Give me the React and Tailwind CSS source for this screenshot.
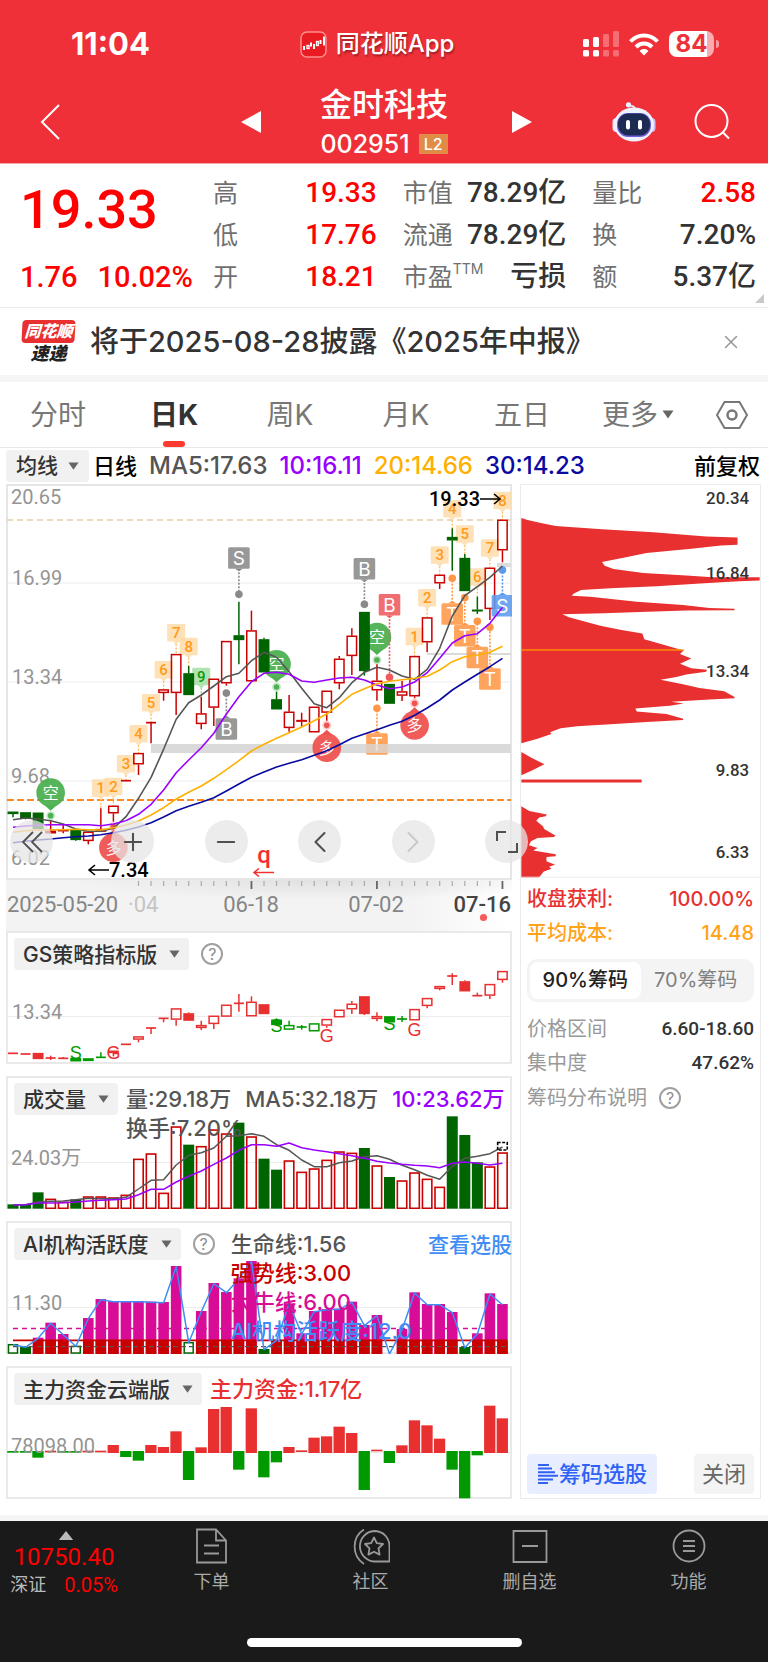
import { ChevronLeft, ChevronRight, ChevronsLeft, Minus, Plus, X } from 'lucide-react';

const DIN = "[font-family:'Roboto','Noto_Sans_CJK_SC',sans-serif]";
const COUNT = 40;
const cx = (i) => 13 + 12.55 * i;

/* Chart data is kept in thirds of a pixel below the top of each drawing. */
const at = (top) => (v) => top + v / 3;
const line = (values, y) => values.map((v, i) => `${cx(i).toFixed(1)},${y(v).toFixed(1)}`).join(' ');

// [up, high, bodyTop, bodyBottom, low]
const candles = [
  [0, 995, 995, 1002, 1012], [0, 997, 997, 1015, 1018], [0, 998, 998, 1047, 1047], [1, 1020, 1052, 1060, 1062],
  [1, 1035, 1048, 1054, 1060], [0, 1050, 1050, 1080, 1082], [1, 1055, 1055, 1083, 1093], [1, 985, 1047, 1055, 1055],
  [1, 977, 977, 1000, 1025], [1, 902, 902, 902, 902], [1, 819, 819, 853, 885], [1, 728, 728, 728, 790],
  [1, 628, 628, 639, 662], [1, 522, 522, 639, 705], [0, 558, 580, 645, 645], [1, 650, 700, 732, 748],
  [1, 596, 596, 683, 738], [1, 483, 483, 610, 617], [0, 365, 466, 480, 553], [1, 392, 451, 604, 604],
  [0, 473, 478, 577, 577], [0, 635, 658, 688, 688], [1, 645, 695, 744, 755], [1, 698, 720, 725, 740],
  [1, 680, 680, 757, 757], [1, 632, 632, 698, 722], [1, 528, 536, 610, 628], [1, 445, 467, 528, 585],
  [0, 396, 396, 573, 587], [1, 553, 602, 631, 662], [0, 612, 612, 671, 671], [1, 603, 634, 647, 663],
  [1, 528, 528, 649, 655], [1, 412, 412, 487, 517], [1, 284, 284, 310, 327], [0, 145, 171, 181, 272],
  [0, 222, 234, 333, 333], [0, 350, 389, 393, 402], [1, 263, 263, 387, 420], [1, 119, 119, 211, 247],
];
const ma5 = [1019, 1014, 1017, 1022, 1032, 1047, 1054, 1054, 1045, 1010, 955, 892, 808, 718, 668, 645, 618, 590, 580, 542, 517, 532, 575, 625, 671, 683, 653, 608, 577, 562, 570, 588, 598, 568, 505, 408, 347, 320, 292, 258];
const ma10 = [1042, 1038, 1036, 1034, 1034, 1034, 1034, 1037, 1032, 1022, 1003, 973, 930, 878, 840, 803, 760, 702, 650, 605, 580, 577, 583, 603, 607, 600, 594, 592, 600, 615, 626, 621, 606, 578, 535, 489, 467, 461, 430, 382];
const ma20 = [1057, 1052, 1050, 1049, 1049, 1048, 1049, 1050, 1043, 1035, 1023, 1005, 983, 957, 937, 918, 895, 869, 842, 813, 793, 775, 758, 741, 722, 702, 673, 643, 626, 611, 604, 599, 595, 589, 570, 545, 530, 525, 517, 499];
const ma30 = [1088, 1084, 1080, 1077, 1073, 1070, 1068, 1064, 1058, 1051, 1041, 1028, 1011, 992, 979, 967, 953, 933, 912, 892, 876, 861, 850, 839, 826, 812, 794, 775, 762, 749, 736, 724, 706, 684, 660, 630, 606, 583, 560, 535];

// [index, label, boxTop, targetY]
const tags = [
  [7, '1', 898, 985], [8, '2', 893, 977], [9, '3', 825, 902], [10, '4', 735, 819], [11, '5', 642, 728], [12, '6', 543, 628],
  [13, '7', 432, 522], [14, '8', 473, 558], [15, '9', 563, 650], [32, '1', 443, 528], [33, '2', 327, 412], [34, '3', 199, 284],
  [35, '4', 60, 145], [36, '5', 136, 222], [37, '6', 265, 350], [38, '7', 178, 263], [39, '8', 35, 119],
];
// [index, label, boxTop, dotY, colour]
const flags = [
  [18, 'S', 202, 343, '#8a8a8a'], [17, 'B', 715, 639, '#8a8a8a'], [28, 'B', 234, 373, '#8a8a8a'], [30, 'B', 342, 592, '#ee5a5f'],
  [29, 'T', 760, 685, '#ff9746'], [35, 'T', 370, 295, '#ff9746'], [36, 'T', 435, 353, '#ff9746'], [37, 'T', 500, 424, '#ff9746'],
  [38, 'T', 565, 442, '#ff9746'], [39, 'S', 345, 270, '#5b9bee'],
];
// [index, label, circleY, dotY, colour]
const pins = [
  [3, '空', 938, 1007, '#4db151'], [21, '空', 553, 621, '#4db151'], [29, '空', 471, 540, '#4db151'],
  [8, '多', 1103, 1040, '#ef5350'], [25, '多', 803, 736, '#ef5350'], [32, '多', 736, 670, '#ef5350'],
];

function AxisLabel({ x = 11, y, children }) {
  return <text x={x} y={y} className={`fill-[#949494] text-[20px] ${DIN}`}>{children}</text>;
}

function Candle({ i, c, y, up, down, filled, half = 5 }) {
  const [, high, top, bottom, low] = c;
  const color = c[0] ? up : down;
  const solid = filled || bottom - top < 6;
  return (
    <g stroke={color} strokeWidth="1.5" fill={solid ? color : 'none'}>
      {high < top && <line x1={cx(i)} x2={cx(i)} y1={y(high)} y2={y(top)} />}
      {low > bottom && <line x1={cx(i)} x2={cx(i)} y1={y(bottom)} y2={y(low)} />}
      {bottom - top < 3
        ? <line x1={cx(i) - half} x2={cx(i) + half} y1={y(top)} y2={y(top)} strokeWidth="1.7" />
        : <rect x={cx(i) - half + 0.3} y={y(top) + 0.6} width={half * 2 - 0.6} height={Math.max((bottom - top) / 3 - 1.2, 0.5)} />}
    </g>
  );
}

function MainChart() {
  const y = at(480);
  return (
    <svg viewBox="6 484 506 396" className="block w-full" role="img" aria-label="日K">
      <rect x="7" y="485" width="504" height="394" fill="#fff" stroke="#e6e6e6" strokeWidth="2" />
      {[583, 682, 781].map((v) => <line key={v} x1="7" x2="511" y1={v} y2={v} stroke="#ececec" />)}
      <rect x="151" y="744" width="360" height="9" fill="#dadada" />
      <rect x="427" y="653" width="84" height="2" fill="#dadada" />
      <rect x="497" y="563" width="14" height="4" fill="#dcdcdc" />
      <line x1="7" x2="511" y1="520" y2="520" stroke="#e3cda8" strokeWidth="1.6" strokeDasharray="6 4" />
      <AxisLabel y={504}>20.65</AxisLabel>
      <AxisLabel x={12} y={585}>16.99</AxisLabel>
      <AxisLabel x={12} y={684}>13.34</AxisLabel>
      <AxisLabel y={783}>9.68</AxisLabel>
      <AxisLabel y={865}>6.02</AxisLabel>
      <line x1="7" x2="511" y1="800" y2="800" stroke="#ff8a1f" strokeWidth="1.8" strokeDasharray="7 3" />
      {pins.map(([i, label, c, d, color]) => {
        const dir = d > c ? 1 : -1;
        return (
          <g key={`${label}${i}`}>
            <circle cx={cx(i)} cy={y(c)} r="14.3" fill={color} opacity="0.95" />
            <path d={`M${cx(i) - 6} ${y(c) + dir * 12.5}L${cx(i)} ${y(c) + dir * 18}L${cx(i) + 6} ${y(c) + dir * 12.5}Z`} fill={color} />
            <circle cx={cx(i)} cy={y(d)} r="4.5" fill={color} opacity="0.3" />
            <circle cx={cx(i)} cy={y(d)} r="2.8" fill={color} />
            <text x={cx(i)} y={y(c) + 6} textAnchor="middle" className="fill-white text-[16px] [font-family:'Noto_Sans_CJK_SC',sans-serif]">{label}</text>
          </g>
        );
      })}
      {tags.map(([i, label, top, target]) => {
        const green = label === '9';
        const fill = green ? '#9fdc9f' : '#ffd9a6';
        return (
          <g key={`tag${i}`}>
            <line x1={cx(i)} x2={cx(i)} y1={y(top) + 20} y2={y(target)} stroke={green ? '#8bd08b' : '#ffb54d'} strokeWidth="1.2" strokeDasharray="2 1.5" />
            <path d={`M${cx(i) - 8} ${y(top)}h16q1 0 1 1v15.500q0 1-1 1h-5l-3 3.500l-3-3.500h-5q-1 0-1-1v-15.500q0-1 1-1Z`} fill={fill} opacity="0.8" />
            <text x={cx(i)} y={y(top) + 14} textAnchor="middle" className={`${green ? 'fill-[#0a9c0a]' : 'fill-[#ff9a1a]'} text-[15px] font-medium [font-family:Roboto,sans-serif]`}>{label}</text>
          </g>
        );
      })}
      {candles.map((c, i) => <Candle key={i} i={i} c={c} y={y} up="#cc0000" down="#006400" filled={!c[0]} />)}
      {flags.map(([i, label, top, dot, color]) => {
        const below = top > dot;
        const edge = below ? y(top) : y(top) + 21.5;
        const dir = below ? -1 : 1;
        return (
          <g key={`flag${i}`}>
            <line x1={cx(i)} x2={cx(i)} y1={edge} y2={y(dot)} stroke={color} strokeWidth="1.6" strokeDasharray="2 1.5" />
            <circle cx={cx(i)} cy={y(dot)} r="3.8" fill={color} />
            <path d={`M${cx(i) - 4} ${edge}L${cx(i)} ${edge + dir * 2.5}L${cx(i) + 4} ${edge}Z`} fill={color} />
            <rect x={cx(i) - 10.8} y={y(top)} width="21.6" height="21.5" rx="1.5" fill={color} opacity="0.88" />
            <text x={cx(i)} y={y(top) + 17.5} textAnchor="middle" className="fill-white text-[19px] [font-family:Inter,sans-serif]">{label}</text>
          </g>
        );
      })}
      <rect x="364" y="744" width="26" height="9" fill="#dadada" opacity="0.75" />
      <g fill="none" strokeWidth="1.6" strokeLinejoin="round">
        <polyline points={line(ma5, y)} stroke="#555" />
        <polyline points={line(ma10, y)} stroke="#9a00ff" />
        <polyline points={line(ma20, y)} stroke="#ffb000" />
        <polyline points={line(ma30, y)} stroke="#0a0aa0" />
      </g>
      <g stroke="#000" strokeWidth="1.6" fill="none">
        <path d="M480 499h20m-6-5 6 5-6 5" />
        <path d="M109 870H89m6-5-6 5 6 5" />
      </g>
      <text x="480" y="506" textAnchor="end" className={`fill-black text-[20px] font-medium ${DIN}`}>19.33</text>
      <text x="109" y="877" className={`fill-black text-[20px] font-medium ${DIN}`}>7.34</text>
      <text x="264" y="863" textAnchor="middle" className="fill-[#f23030] text-[24px] font-medium [font-family:Roboto,sans-serif]">q</text>
      <path d="M274 872.500h-20m5-4-5 4 5 4" stroke="#f23030" strokeWidth="1.6" fill="none" />
    </svg>
  );
}

function RoundButton({ label, children }) {
  return (
    <button type="button" aria-label={label} className="flex size-[43px] items-center justify-center rounded-full bg-[#e6e6e6]/75 text-[#505050]">
      {children}
    </button>
  );
}

function ChartControls() {
  return (
    <div className="absolute -right-4 bottom-[17px] left-1 flex">
      <RoundButton label="最早">
        <svg viewBox="0 0 24 24" className="size-6" fill="none" stroke="currentColor" strokeWidth="1.8"><path d="M13 2L3 12l10 10M22 2L12 12l10 10" /></svg>
      </RoundButton>
      <div className="ml-[58px] flex flex-1 justify-between">
        <RoundButton label="放大"><Plus size={28} strokeWidth={1.8} /></RoundButton>
        <RoundButton label="缩小"><Minus size={28} strokeWidth={1.8} /></RoundButton>
        <RoundButton label="向左"><ChevronLeft size={36} strokeWidth={1.4} /></RoundButton>
        <RoundButton label="向右"><ChevronRight size={36} strokeWidth={1.4} className="text-[#c9c9c9]" /></RoundButton>
        <RoundButton label="全屏">
          <svg viewBox="0 0 24 24" className="size-6" fill="none" stroke="currentColor" strokeWidth="2">
            <path d="M2 11V2h9M22 13v9h-9" />
          </svg>
        </RoundButton>
      </div>
    </div>
  );
}

function DateAxis() {
  return (
    <svg viewBox="6 880 506 51" className="block w-full" role="img" aria-label="日期">
      <defs>
        <linearGradient id="axisX" x1="0" x2="1" y1="0" y2="0">
          <stop offset="0" stopColor="#f3f3f3" /><stop offset="0.8" stopColor="#f3f3f3" /><stop offset="1" stopColor="#fff" />
        </linearGradient>
        <radialGradient id="axisGlow" cx="0.5" cy="0" r="0.5" gradientTransform="translate(0.12 0)">
          <stop offset="0" stopColor="#d9d9d9" /><stop offset="1" stopColor="#d9d9d9" stopOpacity="0" />
        </radialGradient>
      </defs>
      <rect x="6" y="880" width="506" height="52" fill="url(#axisX)" />
      <rect x="6" y="880" width="506" height="40" fill="url(#axisGlow)" opacity="0.7" />
      {Array.from({ length: COUNT - 10 }, (_, k) => k + 10).map((i) => {
        const major = i % 10 === 9;
        return <line key={i} x1={cx(i)} x2={cx(i)} y1="881" y2={major ? 889 : 886} stroke={major ? '#666' : '#aaa'} strokeWidth={major ? 1.8 : 1.2} />;
      })}
      <g className={`fill-[#858585] text-[22px] ${DIN}`}>
        <text x="7" y="912">2025-05-20</text>
        <text x="128" y="912" className="fill-[#c4c4c4]">·04</text>
        <text x="251" y="912" textAnchor="middle">06-18</text>
        <text x="376" y="912" textAnchor="middle">07-02</text>
        <text x="511" y="912" textAnchor="end" className="fill-[#444] font-medium">07-16</text>
      </g>
      <circle cx="483.500" cy="917.500" r="3.600" fill="#f75c5c" />
    </svg>
  );
}

function Caret({ className }) {
  return <svg viewBox="0 0 12 9" className={className} fill="currentColor" aria-hidden="true"><path d="M0.500 0.500h11L6 8.500Z" /></svg>;
}

function HelpIcon() {
  return (
    <button type="button" aria-label="说明" className="flex size-[22px] shrink-0 items-center justify-center rounded-full border-2 border-[#a0a0a0] text-[16px] leading-none text-[#8c8c8c]">?</button>
  );
}

function Panel({ title, help, info, children, top }) {
  return (
    <section className="grid">
      <svg viewBox={`6 ${top} 506 133`} className="block w-full [grid-area:1/1]" role="img" aria-label={title}>
        <rect x="7" y={top + 1} width="504" height="131" fill="#fff" stroke="#e9e9e9" strokeWidth="2" />
        {children}
      </svg>
      <div className="flex items-start self-start pt-[7px] pl-2 text-[21px] leading-[29px] [grid-area:1/1]">
        <button type="button" className="flex h-8 shrink-0 items-center gap-3 rounded bg-[#f1f1f1] px-[9px] font-medium text-[#333]">
          {title}<Caret className="w-[11px] text-[#666]" />
        </button>
        {help && <div className="ml-3 flex h-8 items-center"><HelpIcon /></div>}
        {info}
      </div>
    </section>
  );
}

const gs = [
  ['r', 0, 523, 523, 523, 523], ['r', 0, 525, 525, 525, 525], ['r', 1, 522, 522, 540, 540], ['r', 0, 530, 537, 537, 543], ['r', 0, 534, 538, 538, 540],
  ['g', 1, 537, 537, 547, 547], ['g', 0, 538, 538, 546, 546], ['g', 0, 520, 535, 535, 535], ['r', 1, 515, 515, 522, 532], ['r', 0, 496, 496, 496, 496],
  ['r', 0, 472, 472, 482, 490], ['r', 0, 447, 447, 447, 465], ['r', 0, 418, 418, 418, 430], ['r', 0, 388, 388, 422, 440], ['r', 1, 400, 403, 425, 425],
  ['r', 0, 425, 438, 447, 453], ['r', 0, 410, 410, 435, 450], ['r', 0, 377, 377, 413, 413], ['r', 0, 345, 373, 373, 398], ['r', 0, 352, 368, 412, 412],
  ['r', 1, 376, 376, 405, 405], ['g', 1, 418, 422, 438, 438], ['g', 0, 425, 438, 452, 452], ['g', 0, 438, 444, 444, 452], ['g', 0, 433, 433, 457, 457],
  ['r', 0, 420, 420, 440, 446], ['r', 0, 392, 392, 415, 415], ['r', 0, 366, 374, 391, 405], ['r', 1, 352, 352, 405, 408], ['r', 0, 400, 411, 420, 427],
  ['g', 1, 412, 412, 430, 430], ['g', 0, 411, 420, 420, 429], ['r', 0, 390, 390, 424, 424], ['r', 0, 357, 357, 381, 388], ['r', 0, 321, 321, 330, 334],
  ['r', 0, 283, 291, 291, 318], ['r', 1, 304, 307, 337, 337], ['r', 0, 341, 350, 350, 350], ['r', 0, 315, 315, 350, 360], ['r', 0, 276, 276, 303, 311],
];
const gsMarks = [[5, 'S', 540], [8, 'G', 539], [21, 'S', 458], [25, 'G', 490], [30, 'S', 452], [32, 'G', 472]];

function StrategyPanel() {
  const y = at(880);
  return (
    <Panel title="GS策略指标版" top={932} help>
      <line x1="8" x2="510" y1="1017.500" y2="1017.500" stroke="#ececec" />
      <AxisLabel x={12} y={1020}>13.34</AxisLabel>
      {gs.map(([tone, solid, ...c], i) => (
        <Candle key={i} i={i} c={[tone === 'r', ...c]} y={y} up="#e83030" down="#009a00" filled={solid} />
      ))}
      {gsMarks.map(([i, label, v]) => (
        <text key={i} x={cx(i)} y={y(v)} textAnchor="middle" className={`${label === 'S' ? 'fill-[#009a00]' : 'fill-[#e83030]'} text-[18px] [font-family:'Liberation_Sans',sans-serif]`}>{label}</text>
      ))}
    </Panel>
  );
}

const volume = [403, 403, 367, 386, 395, 388, 379, 379, 382, 374, 266, 250, 368, 169, 224, 228, 178, 190, 158, 199, 266, 299, 271, 305, 295, 269, 244, 248, 234, 286, 321, 331, 307, 326, 350, 139, 195, 277, 289, 247];
const volumeDown = new Set([0, 1, 2, 5, 14, 18, 20, 21, 28, 30, 35, 36, 37]);
const vol5 = [404, 404, 396, 394, 393, 389, 385, 386, 386, 382, 357, 331, 329, 285, 256, 248, 234, 199, 197, 191, 199, 224, 241, 270, 290, 290, 278, 273, 260, 257, 268, 286, 299, 316, 328, 289, 265, 259, 251, 231];
const vol10 = [405, 404, 399, 399, 398, 396, 393, 391, 389, 387, 374, 358, 358, 336, 319, 303, 283, 264, 241, 224, 224, 229, 219, 233, 240, 245, 251, 257, 265, 274, 279, 283, 286, 288, 293, 280, 276, 280, 285, 280];

function VolumePanel() {
  const y = at(1070);
  return (
    <Panel
      title="成交量"
      top={1076}
      info={(
        <div className="ml-2 flex flex-1 flex-wrap gap-x-[14px] pt-[2px] text-[22px] font-medium whitespace-nowrap text-[#555]">
          <span>量:29.18万</span><span>MA5:32.18万</span><span className="text-[#9a00ff]">10:23.62万</span><span>换手:7.20%</span>
        </div>
      )}
    >
      <line x1="8" x2="510" y1="1162.500" y2="1162.500" stroke="#ececec" />
      <AxisLabel y={1165}>24.03万</AxisLabel>
      {volume.map((v, i) => (volumeDown.has(i)
        ? <rect key={i} x={cx(i) - 5.5} y={y(v)} width="11" height={y(416) - y(v)} fill="#006400" />
        : <rect key={i} x={cx(i) - 4.700} y={y(v) + 0.700} width="9.400" height={y(416) - y(v) - 1} fill="none" stroke="#cc0000" strokeWidth="1.600" />))}
      <g fill="none" strokeWidth="1.500" strokeLinejoin="round">
        <polyline points={line(vol5, y)} stroke="#555" />
        <polyline points={line(vol10, y)} stroke="#9a00ff" />
      </g>
      <rect x={cx(39) - 4.800} y="1142.500" width="9.600" height="7.500" fill="none" stroke="#000" strokeWidth="1.600" strokeDasharray="3 1.500" />
    </Panel>
  );
}

const active = [402, 410, 383, 338, 372, 407, 324, 267, 273, 273, 273, 275, 276, 168, 396, 303, 219, 246, 205, 153, 417, 389, 280, 370, 303, 297, 296, 275, 345, 315, 430, 357, 247, 282, 282, 306, 411, 370, 250, 282];
const activeHollow = new Set([0, 5, 14]);
const activeGreen = new Set([1, 20, 36]);

function ActivityPanel() {
  const y = at(1210);
  return (
    <Panel
      title="AI机构活跃度"
      top={1221}
      help
      info={(
        <div className="ml-4 flex flex-1 items-start justify-between pt-[2px] font-medium whitespace-nowrap">
          <ul className="text-[22px]">
            <li className="text-[#555]">生命线:1.56</li>
            <li className="text-[#c80000]">强势线:3.00</li>
            <li className="text-[#d80c96]">大牛线:6.00</li>
            <li className="text-[#3f8df5]">AI机构活跃度:12.0</li>
          </ul>
          <a href="#pick" className="text-[#3f8df5]">查看选股</a>
        </div>
      )}
    >
      <line x1="8" x2="510" y1="1307.500" y2="1307.500" stroke="#ececec" />
      <AxisLabel x={12} y={1310}>11.30</AxisLabel>
      <line x1="13" x2="502" y1="1328.500" y2="1328.500" stroke="#d80c96" strokeWidth="1.600" strokeDasharray="5 4" />
      {active.map((v, i) => {
        if (i === 30) return null;
        if (activeHollow.has(i)) return <rect key={i} x={cx(i) - 4.500} y={y(v) + 0.700} width="9" height={y(430) - y(v) - 1} fill="#fff" stroke="#006400" strokeWidth="1.500" />;
        if (activeGreen.has(i)) return <rect key={i} x={cx(i) - 5.500} y={y(v)} width="11" height={y(432) - y(v)} fill="#006400" />;
        return (
          <g key={i}>
            <rect x={cx(i) - 5.300} y={y(v)} width="10.600" height={y(432) - y(v)} fill="#d80c96" />
            <rect x={cx(i) - 5.300} y={y(391)} width="10.600" height={y(432) - y(391)} fill="#c80000" />
          </g>
        );
      })}
      <line x1="13" x2="507" y1={y(391)} y2={y(391)} stroke="#c80000" strokeWidth="1.600" />
      <line x1="13" x2="507" y1={y(410)} y2={y(410)} stroke="#555" strokeWidth="1.400" strokeDasharray="5 3" />
      <polyline points={line(active.map((v) => v + 2), y)} fill="none" stroke="#3f8df5" strokeWidth="1.500" strokeLinejoin="round" />
    </Panel>
  );
}

const funds = [308, 308, 323, 302, 308, 308, 302, 302, 285, 321, 332, 285, 291, 244, 390, 292, 177, 171, 359, 175, 382, 337, 291, 301, 263, 259, 230, 249, 420, 299, 339, 286, 211, 226, 266, 359, 445, 316, 167, 205];

function FundsPanel() {
  const y = at(1350);
  return (
    <Panel
      title="主力资金云端版"
      top={1366}
      info={<p className="ml-2 pt-[2px] text-[22px] font-medium text-[#e83030]">主力资金:1.17亿</p>}
    >
      <line x1="8" x2="510" y1="1452.500" y2="1452.500" stroke="#ececec" />
      {funds.map((v, i) => {
        const up = v < 304;
        const from = up ? v : 303;
        const to = up ? (v > 295 ? v + 5 : 309) : v;
        return <rect key={i} x={cx(i) - 5.800} y={y(from)} width="11.300" height={Math.max(y(to) - y(from), 1.500)} fill={up ? '#e83030' : '#009a00'} />;
      })}
      <AxisLabel y={1453}>78098.00</AxisLabel>
    </Panel>
  );
}

const chipMain = '31,112 50,118 90,127 135,136 275,146 430,155 590,168 685,171 685,193 635,195 545,205 410,218 340,232 275,245 283,256 310,266 400,278 530,286 610,291 752,291 752,301 690,303 560,311 440,318 300,324 212,330 190,340 183,347 240,350 380,365 520,375 600,384 676,386 676,391 530,392 390,396 280,400 155,403 175,412 270,438 330,450 397,461 403,479 440,489 522,513 511,523 545,537 511,553 545,566 593,571 590,577 530,585 500,593 452,601 520,615 570,626 645,636 676,653 676,657 600,661 485,668 522,673 480,680 376,688 380,697 470,705 521,719 520,723 410,729 300,736 200,742 150,748 118,760 122,765 80,780 31,793';
const chipLow = '31,984 55,998 108,1009 105,1014 85,1018 76,1028 97,1045 100,1053 134,1072 130,1077 80,1080 60,1090 54,1102 80,1110 67,1118 135,1129 135,1135 107,1137 107,1150 133,1161 115,1167 122,1173 98,1182 84,1200 31,1200';

function ChipChart() {
  return (
    <svg viewBox="520 484 241 396" className="block w-full" role="img" aria-label="筹码分布">
      <g transform="translate(510 480) scale(0.333333)" fill="#e83030">
        <polygon points={chipMain} />
        <polygon points="31,820 60,836 101,857 60,877 31,890" />
        <rect x="31" y="903" width="364" height="9" />
        <polygon points={chipLow} />
        <rect x="31" y="509" width="492" height="4" fill="#ff9a00" />
      </g>
      <g className={`fill-[#333] text-[17px] font-medium ${DIN}`} textAnchor="end">
        <text x="750" y="503">20.34</text>
        <text x="750" y="579">16.84</text>
        <text x="750" y="678">13.34</text>
        <text x="750" y="777">9.83</text>
        <text x="750" y="860">6.33</text>
      </g>
      <line x1="520" x2="761" y1="879.500" y2="879.500" stroke="#eee" />
    </svg>
  );
}

function ChipPanel() {
  return (
    <aside className="flex flex-col border border-[#ebebeb]">
      <ChipChart />
      <div className="flex flex-1 flex-col px-[6px] pt-1 text-[20px] leading-[34px]">
        <dl className="font-medium">
          <div className="flex justify-between text-[#e83030]"><dt>收盘获利:</dt><dd>100.00%</dd></div>
          <div className="flex justify-between text-[#ffa31a]"><dt>平均成本:</dt><dd>14.48</dd></div>
        </dl>
        <div className="mt-[9px] flex h-[43px] rounded-[10px] bg-[#f4f4f4] p-[3px] whitespace-nowrap">
          <button type="button" className="flex-1 rounded-lg bg-white font-medium text-[#222]">90%筹码</button>
          <button type="button" className="flex-1 text-[#808080]">70%筹码</button>
        </div>
        <dl className="mt-[10px] text-[#999]">
          <div className="flex justify-between"><dt>价格区间</dt><dd className={`text-[19px] font-medium text-[#333] ${DIN}`}>6.60-18.60</dd></div>
          <div className="flex justify-between"><dt>集中度</dt><dd className={`text-[19px] font-medium text-[#333] ${DIN}`}>47.62%</dd></div>
        </dl>
        <div className="flex items-center gap-3 pt-px text-[#999]">筹码分布说明<HelpIcon /></div>
        <div className="mt-auto mb-1 flex h-10 justify-between text-[22px]">
          <button type="button" className="flex items-center rounded bg-[#e8eeff] px-[10px] font-medium text-[#2f62f5]">
            <svg viewBox="0 0 22 22" className="size-[22px]" stroke="currentColor" strokeWidth="2" aria-hidden="true">
              <path d="M1 2h11M1 5.600h14M1 9.200h17M1 12.800h20M1 16.400h15M1 20h10" />
            </svg>
            筹码选股
          </button>
          <button type="button" className="rounded bg-[#f4f4f4] px-2 text-[#666]">关闭</button>
        </div>
      </div>
    </aside>
  );
}

function StatusBar() {
  return (
    <div className="grid grid-cols-3 items-center pt-7 text-white">
      <div className="pl-[71px] text-[31px] leading-8 font-bold">11:04</div>
      <div className="flex items-center justify-center gap-[9px] pr-[14px] text-[24px] leading-[26px] font-medium [text-shadow:1px_2px_2px_rgba(0,0,0,0.35)]">
        <svg viewBox="0 0 27 27" className="size-[27px]" aria-hidden="true">
          <rect x="1" y="1" width="25" height="25" rx="6" fill="#e81c22" stroke="#ff8d8d" strokeWidth="1.500" />
          <g fill="none" stroke="#fff" strokeWidth="1.300">
            <path d="M4 15v4M20.500 9v4M24 5.500v9" strokeWidth="2" />
            <rect x="7" y="14.500" width="2" height="3" /><path d="M11 11.500v4M14 13v5" strokeWidth="2" /><rect x="16.500" y="10.500" width="1.800" height="4" />
          </g>
        </svg>
        同花顺App
      </div>
      <div className="flex items-center justify-end gap-[10px] pr-[49px]">
        <svg viewBox="0 0 36 26" className="h-[26px] w-9" fill="#fff" aria-hidden="true">
          <rect x="0" y="8" width="6" height="8" rx="1.500" /><rect x="10" y="6" width="6" height="10" rx="1.500" />
          <rect x="20" y="3" width="6" height="13" rx="1.500" opacity="0.3" /><rect x="30" y="0" width="6" height="16" rx="1.500" opacity="0.3" />
          <rect x="0" y="19" width="6" height="6.500" rx="1.500" /><rect x="10" y="19" width="6" height="6.500" rx="1.500" />
          <rect x="20" y="19" width="6" height="6.500" rx="1.500" opacity="0.3" /><rect x="30" y="19" width="6" height="6.500" rx="1.500" opacity="0.3" />
        </svg>
        <svg viewBox="0 0 30 23" className="h-[23px] w-[30px]" fill="none" stroke="#fff" strokeWidth="4" aria-hidden="true">
          <path d="M1.500 8.500C9 0.500 21 0.500 28.500 8.500M7 14C11.500 9.300 18.500 9.300 23 14" />
          <path d="M15 22.500L10.600 18C13 15.400 17 15.400 19.400 18Z" fill="#fff" stroke="none" />
        </svg>
        <div className="flex items-center gap-[2px]">
          <div className="flex h-[26px] w-[45px] items-center justify-center rounded-lg bg-linear-to-r from-white from-84% to-white/60 to-84% text-[24px] leading-none font-bold text-[#f03038]">84</div>
          <div className="h-2 w-[3px] rounded-r bg-white/50" />
        </div>
      </div>
    </div>
  );
}

function Robot() {
  return (
    <svg viewBox="0 0 44 40" className="h-10 w-11" aria-hidden="true">
      <path d="M23 8C23 4 20 4 16 3" stroke="#e9ebfa" strokeWidth="2" fill="none" />
      <circle cx="16.500" cy="2.800" r="2.600" fill="#eef0ff" />
      <rect x="0.500" y="16" width="8" height="14" rx="4" fill="#dfe4fb" /><rect x="35.500" y="16" width="8" height="14" rx="4" fill="#cdbdf5" />
      <ellipse cx="22" cy="22.500" rx="20" ry="17" fill="#eff1fd" />
      <rect x="5" y="11" width="34" height="24" rx="11" fill="#6d5fe0" /><rect x="6" y="11.500" width="32" height="22" rx="10" fill="#1d2b52" />
      <rect x="14" y="18" width="4" height="9.500" rx="2" fill="#fff" /><rect x="26" y="18" width="4" height="9.500" rx="2" fill="#fff" />
    </svg>
  );
}

function Header() {
  return (
    <header className="border-b border-[#f7a5a8] bg-[#f03038] pb-[6px]">
      <StatusBar />
      <div className="mt-[27px] grid grid-cols-[1fr_auto_1fr] items-center text-white">
        <div className="flex items-center justify-between pl-[40px]">
          <button type="button" aria-label="返回"><svg viewBox="0 0 20 36" className="h-9 w-5" fill="none" stroke="#fff" strokeWidth="2"><path d="M19 1L2 18L19 35" /></svg></button>
          <button type="button" aria-label="上一只"><svg viewBox="0 0 20 22" className="h-[22px] w-5" fill="#fff"><path d="M20 0v22L0 11Z" /></svg></button>
        </div>
        <div className="mx-[59px] text-center">
          <h1 className="text-[32px] leading-9 font-medium">金时科技</h1>
          <p className="mt-2 flex items-center justify-center gap-[9px] text-[25px] leading-[26px] font-medium">002951 <span className="bg-[#e08c46] px-[5px] text-[16px] leading-5 font-medium">L2</span></p>
        </div>
        <div className="flex items-center pr-[38px] pl-[5px]">
          <button type="button" aria-label="下一只"><svg viewBox="0 0 20 22" className="h-[22px] w-5" fill="#fff"><path d="M0 0v22l20-11Z" /></svg></button>
          <button type="button" aria-label="智能助手" className="ml-auto"><Robot /></button>
          <button type="button" aria-label="搜索" className="ml-[38px]">
            <svg viewBox="0 0 36 36" className="size-9" fill="none" stroke="#fff" strokeWidth="2"><circle cx="17.500" cy="17" r="16" /><path d="M29 28.500l6 6" /></svg>
          </button>
        </div>
      </div>
    </header>
  );
}

const stats = [
  ['高', '19.33', 1, '市值', '78.29亿', 0, '量比', '2.58', 1],
  ['低', '17.76', 1, '流通', '78.29亿', 0, '换', '7.20%', 0],
  ['开', '18.21', 1, '市盈', '亏损', 0, '额', '5.37亿', 0],
];

function Stat({ label, value, red }) {
  return (
    <div className="flex items-center justify-between whitespace-nowrap">
      <dt className="text-[25px] text-[#707070]">{label}{label === '市盈' && <sup className="relative -top-3 text-[14px]">TTM</sup>}</dt>
      <dd className={`text-[28px] font-medium ${DIN} ${red ? 'text-[#ff0000]' : 'text-[#333]'}`}>{value}</dd>
    </div>
  );
}

function Quote() {
  return (
    <section className="relative flex border-b border-[#eaeaea] pt-2 pb-[9px]">
      <div className={`w-[213px] shrink-0 pl-5 text-[#ff0000] ${DIN}`}>
        <div className="pt-2 text-[54px] leading-[60px] font-medium">19.33</div>
        <div className="mt-[17px] flex gap-5 text-[29px] leading-10 font-medium"><span>1.76</span><span>10.02%</span></div>
      </div>
      <dl className="grid flex-1 grid-cols-3 gap-x-[26px] pr-3 leading-[42px]">
        {stats.map((r) => [0, 3, 6].map((k) => <Stat key={r[k]} label={r[k]} value={r[k + 1]} red={r[k + 2]} />))}
      </dl>
      <svg viewBox="0 0 9 9" className="absolute right-1 bottom-1 size-[9px]" fill="#c9c9c9" aria-hidden="true"><path d="M9 0v9H0Z" /></svg>
    </section>
  );
}

function News() {
  return (
    <section className="flex h-[74px] items-center border-b-[7px] border-[#f5f5f5] pr-[26px] pl-[22px]">
      <div className="w-[53px] shrink-0 text-center italic">
        <div className="h-[23px] -skew-x-3 rounded-sm bg-[#e83030] text-[16px] leading-[22px] font-black text-white">同花顺</div>
        <div className="h-[21px] text-[18px] leading-[22px] font-black text-[#222]">速递</div>
      </div>
      <a href="#news" className="ml-[15px] flex-1 text-[29px] font-medium whitespace-nowrap text-[#333]">将于2025-08-28披露《2025年中报》</a>
      <button type="button" aria-label="关闭" className="text-[#999]"><X size={22} strokeWidth={1.7} /></button>
    </section>
  );
}

function Tabs() {
  return (
    <nav className="grid h-[66px] grid-cols-[repeat(6,116fr)_72fr] items-center justify-items-center border-b border-[#e8e8e8] text-[28px] text-[#777]">
      <button type="button">分时</button>
      <button type="button" className="relative flex h-full items-center font-bold text-[#333]">
        日K<span className="absolute bottom-0 left-1/2 h-[6px] w-[22px] -translate-x-1/2 rounded-full bg-[#fb3a30]" />
      </button>
      <button type="button">周K</button>
      <button type="button">月K</button>
      <button type="button">五日</button>
      <button type="button" className="flex items-center gap-1">更多<Caret className="w-3 text-[#666]" /></button>
      <button type="button" aria-label="设置">
        <svg viewBox="0 0 32 28" className="h-7 w-8" fill="none" stroke="#777" strokeWidth="2"><path d="M8.500 1h15L31 14L23.500 27h-15L1 14Z" /><circle cx="16" cy="14" r="4.500" strokeWidth="2.500" /></svg>
      </button>
    </nav>
  );
}

function Averages() {
  return (
    <div className="flex h-9 items-center pr-2 pl-[6px] text-[24px] leading-8 font-medium whitespace-nowrap">
      <button type="button" className="flex h-8 items-center gap-[10px] rounded bg-[#f1f1f1] px-[10px] text-[21px] text-[#333]">均线<Caret className="w-[11px] text-[#666]" /></button>
      <span className="ml-1 text-[22px] text-black">日线</span>
      <span className="ml-3 text-[#555]">MA5:17.63</span>
      <span className="ml-3 text-[#9a00ff]">10:16.11</span>
      <span className="ml-3 text-[#ffb000]">20:14.66</span>
      <span className="ml-3 text-[#0a0aa0]">30:14.23</span>
      <button type="button" className="ml-auto text-[22px] text-black">前复权</button>
    </div>
  );
}

const navItems = [
  ['下单', <path key="a" d="M3 1.500h19l10 11v22H3Z M22 1.500v11h10 M10 17.500h15 M10 25.500h15" />],
  ['社区', <g key="b"><path d="M11 1.500C-1.500 9-1.500 28 11 36" /><path d="M21 3c9 0 15.500 6.500 15.500 15.500V33.500H21A15.300 15.300 0 0 1 21 3Z" /><path strokeLinejoin="round" d="M21 9.500l2.800 5.600 6.200 0.900-4.500 4.400 1.100 6.200-5.600-2.900-5.600 2.900 1.100-6.200L12 16l6.200-0.900Z" /></g>],
  ['删自选', <path key="c" d="M1.500 3h33v31h-33Z M10 18h16" />],
  ['功能', <g key="d"><circle cx="18" cy="18" r="15.500" /><path d="M12 13h12M12 18h12M12 23h12" /></g>],
];

function BottomBar() {
  return (
    <footer className="border-t-[6px] border-[#f5f5f5]">
      <div className="bg-[#1a1a1a] pt-[7px] pb-[15px]">
        <nav className="flex">
          <button type="button" className={`w-[132px] shrink-0 text-[#ff0000] ${DIN}`}>
            <svg viewBox="0 0 16 10" className="mx-auto mt-[3px] h-[9px] w-4" fill="#bbb" aria-hidden="true"><path d="M8 0l8 10H0Z" /></svg>
            <span className="block pt-[3px] pr-1 text-[24px] leading-7">10750.40</span>
            <span className="flex items-center justify-center gap-[18px] pr-1 text-[20px] leading-7"><span className="text-[18px] text-[#bbb]">深证</span>0.05%</span>
          </button>
          {navItems.map(([label, icon]) => (
            <a key={label} href={`#${label}`} className="flex flex-1 flex-col items-center text-[18px] leading-6 text-[#aaa]">
              <svg viewBox="-1 0 38 37" className="h-[37px] w-[38px]" fill="none" stroke="#999" strokeWidth="1.800" aria-hidden="true">{icon}</svg>
              <span className="pt-[5px]">{label}</span>
            </a>
          ))}
        </nav>
        <div className="mx-auto mt-[39px] h-[9px] w-[275px] rounded-full bg-white" />
      </div>
    </footer>
  );
}

export default function App() {
  return (
    <div className="bg-white [font-family:Inter,'Noto_Sans_CJK_SC',sans-serif]">
      <Header />
      <main>
        <Quote />
        <News />
        <Tabs />
        <Averages />
        <div className="grid grid-cols-[506fr_241fr] gap-2 pr-[7px] pb-4 pl-[6px]">
          <div>
            <div className="relative z-10"><MainChart /><ChartControls /></div>
            <DateAxis />
            <div className="flex flex-col gap-3">
              <StrategyPanel />
              <VolumePanel />
              <ActivityPanel />
              <FundsPanel />
            </div>
          </div>
          <ChipPanel />
        </div>
      </main>
      <BottomBar />
    </div>
  );
}
